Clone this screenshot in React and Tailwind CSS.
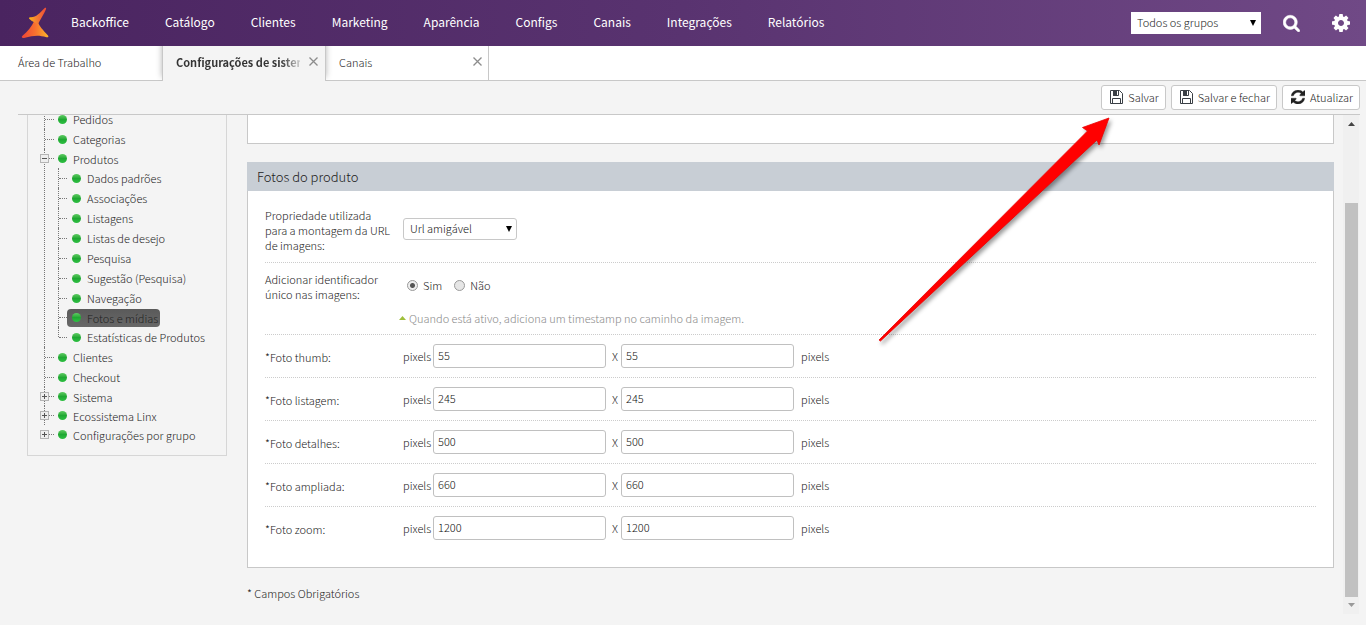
import React from 'react';

const NAV_ITEMS = ['Backoffice', 'Catálogo', 'Clientes', 'Marketing', 'Aparência', 'Configs', 'Canais', 'Integrações', 'Relatórios'];

const TREE = [
  { label: 'Pedidos' },
  { label: 'Categorias' },
  {
    label: 'Produtos',
    toggle: 'minus',
    children: [
      'Dados padrões',
      'Associações',
      'Listagens',
      'Listas de desejo',
      'Pesquisa',
      'Sugestão (Pesquisa)',
      'Navegação',
      'Fotos e mídias',
      'Estatísticas de Produtos',
    ],
  },
  { label: 'Clientes' },
  { label: 'Checkout' },
  { label: 'Sistema', toggle: 'plus' },
  { label: 'Ecossistema Linx', toggle: 'plus' },
  { label: 'Configurações por grupo', toggle: 'plus' },
];

const PHOTO_SIZES = [
  { id: 'thumb', label: 'Foto thumb', size: 55 },
  { id: 'listagem', label: 'Foto listagem', size: 245 },
  { id: 'detalhes', label: 'Foto detalhes', size: 500 },
  { id: 'ampliada', label: 'Foto ampliada', size: 660 },
  { id: 'zoom', label: 'Foto zoom', size: 1200 },
];

const Logo = () => (
  <svg width="28" height="32" viewBox="0 0 28 32" aria-hidden="true">
    <defs>
      <linearGradient id="logoTop" x1="0" y1="0" x2="1" y2="0">
        <stop offset="0" stopColor="#fdb813" />
        <stop offset="0.4" stopColor="#f58232" />
        <stop offset="1" stopColor="#ee4a36" />
      </linearGradient>
      <linearGradient id="logoBottom" x1="0" y1="0" x2="1" y2="0">
        <stop offset="0" stopColor="#ee4436" />
        <stop offset="0.5" stopColor="#f8702f" />
        <stop offset="1" stopColor="#fdb52a" />
      </linearGradient>
    </defs>
    <path d="M13.500 13.500l3.500 1.500c1 4 5 8 10 13.500 1 1.500 0 2.200-1.500 1.700-8-2.200-12-2-22.500.8-2 .4-3-.8-1.500-2.200 5-4 9-9 12-15.300z" fill="url(#logoBottom)" />
    <path d="M23.500 1.300c1-1 2-.3 1.500 1-2 5-5 9-8 14.700-2.500-1-6-2.500-8.500-5-1-1-.3-2 1-1.800 5.500.3 9-3.700 14-8.900z" fill="url(#logoTop)" />
  </svg>
);

const SearchIcon = () => (
  <svg width="17" height="18" viewBox="0 0 1664 1792" fill="currentColor" stroke="currentColor" strokeWidth="50" aria-hidden="true">
    <path d="M1152 832q0-185-131.500-316.500t-316.500-131.500-316.500 131.500-131.500 316.500 131.500 316.500 316.500 131.500 316.500-131.500 131.500-316.500zm512 832q0 52-38 90t-90 38q-54 0-90-38l-343-342q-179 124-399 124-143 0-273.500-55.500t-225-150-150-225-55.500-273.500 55.500-273.500 150-225 225-150 273.500-55.500 273.500 55.500 225 150 150 225 55.500 273.500q0 220-124 399l343 343q37 37 37 90z" />
  </svg>
);

const CogIcon = () => (
  <svg width="18" height="18" viewBox="0 128 1536 1536" fill="currentColor" aria-hidden="true">
    <path d="M1024 896q0-106-75-181t-181-75-181 75-75 181 75 181 181 75 181-75 75-181zm512-109v222q0 12-8 23t-20 13l-185 28q-19 54-39 91 35 50 107 138 10 12 10 25t-9 23q-27 37-99 108t-94 71q-12 0-26-9l-138-108q-44 23-91 38-16 136-29 186-7 28-36 28h-222q-14 0-24.500-8.500t-11.500-21.500l-28-184q-49-16-90-37l-141 107q-10 9-25 9-14 0-25-11-126-114-165-168-7-10-7-23 0-12 8-23 15-21 51-66.500t54-70.500q-27-50-41-99l-183-27q-13-2-21-12.500t-8-23.500v-222q0-12 8-23t19-13l186-28q14-46 39-92-40-57-107-138-10-12-10-24 0-10 9-23 26-36 98.500-107.500t94.500-71.500q13 0 26 10l138 107q44-23 91-38 16-136 29-186 7-28 36-28h222q14 0 24.500 8.500t11.500 21.500l28 184q49 16 90 37l142-107q9-9 24-9 13 0 25 10 129 119 165 170 7 8 7 22 0 12-8 23-15 21-51 66.500t-54 70.500q26 50 41 98l183 28q13 2 21 12.500t8 23.500z" />
  </svg>
);

const RefreshIcon = () => (
  <svg width="14" height="14" viewBox="0 128 1536 1536" fill="currentColor" stroke="currentColor" strokeWidth="40" aria-hidden="true">
    <path d="M1511 1056q0 5-1 7-64 268-268 434.500t-478 166.500q-146 0-282.500-55t-243.500-157l-129 129q-19 19-45 19t-45-19-19-45v-448q0-26 19-45t45-19h448q26 0 45 19t19 45-19 45l-137 137q71 66 161 102t187 36q134 0 250-65t186-179q11-17 53-117 8-23 30-23h192q13 0 22.500 9.500t9.500 22.500zm25-800v448q0 26-19 45t-45 19h-448q-26 0-45-19t-19-45 19-45l138-138q-148-137-349-137-134 0-250 65t-186 179q-11 17-53 117-8 23-30 23h-199q-13 0-22.500-9.500t-9.500-22.500v-7q65-268 270-434.500t480-166.500q146 0 284 55.500t245 156.500l130-129q19-19 45-19t45 19 19 45z" />
  </svg>
);

const SaveIcon = () => (
  <svg width="13" height="14" viewBox="0 0 13 14" fill="none" stroke="#3a3f45" aria-hidden="true">
    <path d="M.5.5h9l3 3v10H.5z" />
    <path d="M3.500.5v5h5v-5M2.500 13V8.500h8V13" />
    <path d="M3.500.5h3v5h-3z" fill="#3a3f45" />
  </svg>
);

const CloseIcon = () => (
  <svg width="9" height="9" viewBox="0 0 9 9" stroke="#8c8c8c" strokeWidth="1.3" aria-hidden="true">
    <path d="M.5.5l8 8M8.500.5l-8 8" />
  </svg>
);

const Caret = () => (
  <svg width="6" height="6" viewBox="0 0 6 6" className="pointer-events-none absolute right-[5px] top-2" aria-hidden="true">
    <path d="M0 0h6L3 6z" fill="#000" />
  </svg>
);

const Toggle = ({ type }) => (
  <button type="button" aria-label={type === 'plus' ? 'Expandir' : 'Recolher'} className="-ml-[5px] block h-[9px] w-[9px]">
    <svg width="9" height="9" viewBox="0 0 9 9" className="block" fill="none" aria-hidden="true">
      <rect x=".5" y=".5" width="8" height="8" fill="#eee" stroke="#b4b4b4" />
      <path d={type === 'plus' ? 'M2 4.500h5M4.500 2v5' : 'M2 4.500h5'} stroke="#555" />
    </svg>
  </button>
);

const Dot = () => <span className="h-[9px] w-[9px] shrink-0 rounded-full bg-linear-to-b from-[#5ccb62] via-[#1fa833] to-[#2fc043]" />;

const TreeLeaf = ({ label, last, active }) => (
  <li className={`flex items-center ${active ? 'h-[19px]' : 'h-5'}`}>
    <span className={`w-px shrink-0 self-start border-l border-dotted border-[#777] ${last ? 'h-1/2' : 'h-full'}`} />
    <span className="w-2 shrink-0 border-t border-dotted border-[#777]" />
    <a
      href="#"
      className={`flex items-center gap-[6px] rounded pl-[5px] pr-[2px] leading-[18px] ${active ? 'bg-linear-to-b from-[#5a5a5a] to-[#686868]' : ''}`}
    >
      <Dot />
      {label}
    </a>
  </li>
);

const Sidebar = () => (
  <nav aria-label="Configurações" className="w-[200px] shrink-0 self-start overflow-hidden border border-t-0 border-[#d6d6d6] pb-[11px] pl-4">
    <ul className="-mt-[6px]">
      {TREE.map((node, i) => (
        <li key={node.label} className={i < TREE.length - 1 ? 'border-l border-dotted border-[#777]' : 'border-l border-transparent'}>
          <div className={`flex items-center ${node.toggle ? 'h-[19px]' : 'h-5'}`}>
            {node.toggle && <Toggle type={node.toggle} />}
            <span className={`border-t border-dotted border-[#777] ${node.toggle ? 'w-[5px]' : 'w-[9px]'}`} />
            <a href="#" className="flex items-center gap-[6px] pl-1 leading-[18px]">
              <Dot />
              {node.label}
            </a>
          </div>
          {node.children && (
            <ul className="pl-[13px]">
              {node.children.map((child, j) => (
                <TreeLeaf key={child} label={child} last={j === node.children.length - 1} active={child === 'Fotos e mídias'} />
              ))}
            </ul>
          )}
        </li>
      ))}
    </ul>
  </nav>
);

const Header = () => (
  <header className="flex h-[46px] items-center bg-linear-to-r from-[#4a2460] via-[#593370] to-[#704986] text-white">
    <a href="#" aria-label="Início" className="ml-[21px]">
      <Logo />
    </a>
    <nav className="ml-[22px] flex gap-9 pb-[2px] text-xs font-normal leading-5">
      {NAV_ITEMS.map((item) => (
        <a key={item} href="#">{item}</a>
      ))}
    </nav>
    <div className="ml-auto mr-4 flex items-center">
      <div className="relative">
        <select aria-label="Grupo" className="block h-[22px] w-[130px] appearance-none bg-white pb-[2px] pl-[6px] leading-5 text-[#222]">
          <option>Todos os grupos</option>
        </select>
        <Caret />
      </div>
      <button type="button" aria-label="Buscar" className="ml-[22px]"><SearchIcon /></button>
      <button type="button" aria-label="Opções" className="ml-8"><CogIcon /></button>
    </div>
  </header>
);

const Tabs = () => (
  <div className="flex h-[35px] border-b border-[#c8c8c8] bg-white">
    <a href="#" className="w-[162px] pl-[18px] pt-[7px] leading-[18px]">Área de Trabalho</a>
    <div className="relative z-10 -mb-px flex w-[164px] border-x border-[#c8c8c8] bg-[#f4f4f4] pl-[13px] pt-[7px] shadow-[0_-4px_6px_rgba(0,0,0,0.3)] [clip-path:inset(0_-8px_0_-8px)]">
      <a href="#" className="w-[124px] overflow-hidden whitespace-nowrap bg-linear-to-r from-[#333] from-85% to-[#33333330] bg-clip-text font-bold leading-[18px] text-transparent">
        Configurações de sistema
      </a>
      <button type="button" aria-label="Fechar aba" className="ml-[9px] self-start pt-1"><CloseIcon /></button>
    </div>
    <div className="flex w-[163px] border-r border-[#c8c8c8] pl-[13px] pt-[7px]">
      <a href="#" className="leading-[18px]">Canais</a>
      <button type="button" aria-label="Fechar aba" className="ml-auto mr-[6px] self-start pt-1"><CloseIcon /></button>
    </div>
  </div>
);

const ToolButton = ({ icon, children }) => (
  <button type="button" className="flex h-[25px] items-center gap-[5px] rounded-[3px] border border-[#c8c8c8] bg-white pb-[2px] pl-2 pr-[6px] leading-[18px]">
    {icon}
    {children}
  </button>
);

const Radio = ({ label, ...props }) => (
  <label className="flex items-center gap-[5px]">
    <input
      type="radio"
      name="identificador"
      className="h-[11px] w-[11px] appearance-none rounded-full border border-[#9a9a9a] bg-[#e6e6e6] checked:bg-[radial-gradient(circle,#555_0_2px,#eee_3px)]"
      {...props}
    />
    {label}
  </label>
);

const SizeInput = (props) => (
  <input type="text" className="h-6 w-[173px] rounded-[3px] border border-[#c0c0c0] bg-white px-1 pb-[2px] leading-[18px] text-[#111]" {...props} />
);

const ProductPhotos = () => (
  <section className="border border-[#c8c8c8] bg-white">
    <h2 className="-mx-px -mt-px bg-[#c8ced5] pb-1 pl-[10px] pt-[5px] text-[13px] leading-5">Fotos do produto</h2>
    <div className="px-[17px] pb-[17px] pt-[9px]">
      <div className="flex border-b border-dotted border-[#ccc] pb-[9px] pt-2">
        <label htmlFor="url" className="w-[138px] pr-2 leading-[15px]">
          Propriedade utilizada para a montagem da URL de imagens:
        </label>
        <div className="relative mt-[10px] self-start">
          <select id="url" className="block h-[22px] w-[114px] appearance-none rounded-[3px] border border-[#c8c8c8] bg-white pb-[2px] pl-[6px] leading-[18px] text-[#111]">
            <option>Url amigável</option>
          </select>
          <Caret />
        </div>
      </div>
      <div className="flex h-[72px] border-b border-dotted border-[#ccc] pt-[9px]">
        <span className="w-[138px] pr-2 leading-[15px]">Adicionar identificador único nas imagens:</span>
        <div className="leading-[18px]">
          <div className="flex gap-3 pl-1 pt-1">
            <Radio label="Sim" defaultChecked />
            <Radio label="Não" />
          </div>
          <p className="-ml-1 mt-[15px] flex items-center gap-[3px] text-[#888]">
            <svg width="7" height="4" viewBox="0 0 7 4" aria-hidden="true"><path d="M0 4l3.500-4L7 4z" fill="#9fbf3b" /></svg>
            Quando está ativo, adiciona um timestamp no caminho da imagem.
          </p>
        </div>
      </div>
      {PHOTO_SIZES.map(({ id, label, size }) => (
        <div key={id} className="flex h-[43px] border-b border-dotted border-[#ccc] last:border-b-0">
          <label htmlFor={id} className="w-[138px] pt-[15px] leading-[15px]">*{label}:</label>
          <div className="flex items-center self-start pt-[9px]">
            <span className="w-[30px]">pixels</span>
            <SizeInput id={id} defaultValue={size} />
            <span className="w-[15px] pl-[6px]">X</span>
            <SizeInput aria-label={`${label} altura`} defaultValue={size} />
            <span className="ml-[7px]">pixels</span>
          </div>
        </div>
      ))}
    </div>
  </section>
);

const Scrollbar = () => (
  <div className="ml-[9px] flex h-[499px] w-4 shrink-0 flex-col items-center bg-[#f0f0f0]" aria-hidden="true">
    <svg width="7" height="4" viewBox="0 0 7 4" className="my-[7px]"><path d="M0 4l3.500-4L7 4z" fill="#444" /></svg>
    <div className="mt-[70px] w-[13px] grow bg-[#c1c1c1]" />
    <svg width="7" height="4" viewBox="0 0 7 4" className="mb-[7px] mt-[6px]"><path d="M0 0h7L3.500 4z" fill="#999" /></svg>
  </div>
);

// Arrow pointing at the save button
const PointerArrow = () => (
  <svg width="240" height="234" viewBox="0 0 240 234" className="pointer-events-none absolute right-[250px] top-[114px] z-20" aria-hidden="true">
    <path d="M3 226L211.500 17l-5-3.500 26.500-9.500-10 27-2-5L4.500 227z" fill="#f00" stroke="#e80000" strokeWidth=".8" className="drop-shadow-[2px_3px_2px_rgba(0,0,0,0.4)]" />
  </svg>
);

export default function App() {
  return (
    <div className="relative min-h-screen overflow-hidden bg-[#f4f4f4] font-['Noto_Sans_CJK_SC','Source_Sans_Pro',sans-serif] text-[11px] font-light text-[#222]">
      <Header />
      <Tabs />
      <div className="ml-[18px] mr-[6px] flex h-[34px] items-start justify-end gap-[5px] border-b border-[#c8c8c8] pt-1">
        <ToolButton icon={<SaveIcon />}>Salvar</ToolButton>
        <ToolButton icon={<SaveIcon />}>Salvar e fechar</ToolButton>
        <ToolButton icon={<RefreshIcon />}>Atualizar</ToolButton>
      </div>
      <div className="flex pl-[27px] pr-[7px]">
        <Sidebar />
        <main className="ml-5 grow">
          <div className="mb-[18px] h-[29px] border border-t-0 border-[#c8c8c8] bg-white" />
          <ProductPhotos />
          <p className="mt-4 leading-[18px]">* Campos Obrigatórios</p>
        </main>
        <Scrollbar />
      </div>
      <PointerArrow />
    </div>
  );
}
